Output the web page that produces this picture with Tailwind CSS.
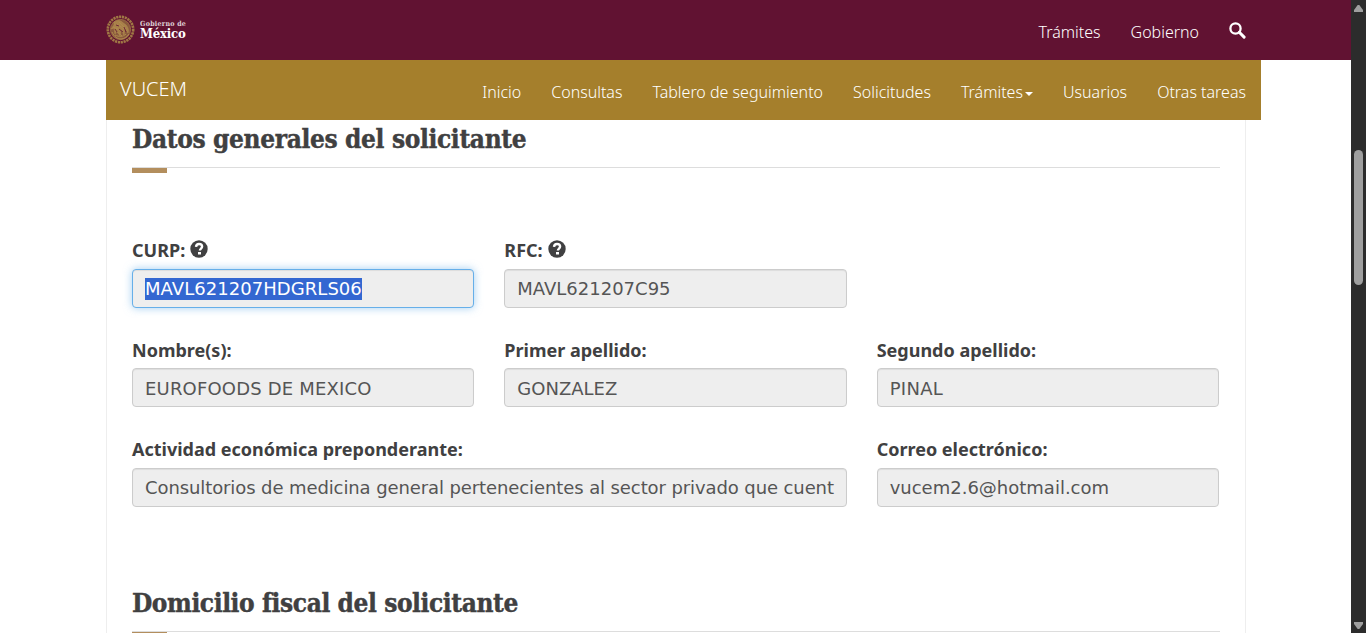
<!DOCTYPE html>
<html lang="es">
<head>
<meta charset="utf-8">
<title>VUCEM</title>
<script src="https://cdn.jsdelivr.net/npm/@tailwindcss/browser@4"></script>
</head>
<body class="flex h-[633px] overflow-hidden bg-white font-['Noto_Sans',sans-serif] text-[#404041]">
<div class="flex h-full w-[1351px] flex-col">
  <header class="h-[60px] shrink-0 bg-[#611232] pl-[106px]">
    <div class="flex h-full w-[1140px] items-center justify-between text-white">
      <div class="flex items-center gap-[5px]">
        <svg class="-mt-px size-[29px]" viewBox="0 0 29 29" fill="none" stroke="#b08a4e">
          <circle cx="14.5" cy="14.5" r="12.7" stroke="#a07845" stroke-width="2.6" stroke-dasharray="2.2 .7"/>
          <circle cx="14.5" cy="14.5" r="10.2" fill="#8a5a3d" stroke-width=".5"/>
          <path d="M8 7c3-2 6-2 8 0l4 3c2 2 3 5 2 8l-3-5-1 7-3-6-1 7-3-6-2 4-1-6-3 1 3-4z" fill="#a8814a" stroke-width=".6"/>
          <path d="M6 17c2 5 6 7 9 7s6-2 8-5M9 20c4 2 8 2 11-1M7 12l5 2M11 9l7 5M13 7l7 7M10 16l6 5" stroke-width="1"/>
          <path d="M10 10l3 1M13 14l4 3M18 12l2 5M9 14l2 3" stroke="#611232" stroke-width=".8"/>
        </svg>
        <div class="flex flex-col font-['DejaVu_Serif_Condensed','DejaVu_Serif',serif]">
          <span class="text-[7px] leading-[8px] font-bold tracking-[0.28px] opacity-80">Gobierno de</span>
          <span class="text-[13px] leading-[12px] font-bold tracking-[-0.2px]">México</span>
        </div>
      </div>
      <nav class="flex items-center gap-[30px] pt-1 text-[16px] leading-6 font-[350]">
        <a>Trámites</a>
        <a>Gobierno</a>
        <svg class="-mt-[3px] size-[17px]" viewBox="0 0 17 17" fill="none" stroke="#fff">
          <circle cx="6.5" cy="6.5" r="5.1" stroke-width="2.3"/>
          <path d="M10.3 10.3l4.8 4.8" stroke-width="3" stroke-linecap="round"/>
        </svg>
      </nav>
    </div>
  </header>
  <div class="ml-[106px] flex h-[60px] w-[1155px] shrink-0 justify-between bg-[#a57f2c] pr-[15px] pl-[14px] font-[350] text-white">
    <span class="pt-[15px] text-[20px] leading-7">VUCEM</span>
    <nav class="flex items-start gap-[30px] pt-5 text-[16px] leading-6">
      <a>Inicio</a>
      <a>Consultas</a>
      <a>Tablero de seguimiento</a>
      <a>Solicitudes</a>
      <a class="flex items-center gap-[2px]">Trámites<svg class="mt-1 h-1 w-2" viewBox="0 0 8 4" fill="#fff"><path d="M0 0h8L4 4z"/></svg></a>
      <a>Usuarios</a>
      <a>Otras tareas</a>
    </nav>
  </div>
  <main class="ml-[106px] w-[1140px] grow overflow-hidden border-x border-[#eee] pl-[25px]">
    <h2 class="h-12 w-[1088px] border-b border-[#ddd] pt-[3px] font-['DejaVu_Serif_Condensed','DejaVu_Serif',serif] text-[26px] leading-8 font-bold whitespace-nowrap tracking-[-0.36px] [-webkit-text-stroke:0.4px_#404041]">Datos generales del solicitante</h2>
    <div class="h-[5px] w-[35px] bg-[#b38e5d]"></div>
    <form class="mt-16 grid w-[1087px] grid-cols-3 gap-x-[30px] text-[18px]">
      <div class="h-[99px]">
        <label class="mb-[5px] flex h-[27px] items-center gap-[5px] font-bold">CURP:
          <svg class="-mt-[3px] size-[18px]" viewBox="0 0 18 18"><circle cx="9" cy="9" r="8.7" fill="#404041"/><path d="M6 6.8C6.2 4.8 7.3 4 9 4s3.1 1 3.1 2.6c0 2-2.2 2-2.2 4" fill="none" stroke="#fff" stroke-width="2.4"/><path d="M8 12h3v2.5H8z" fill="#fff"/></svg>
        </label>
        <div class="flex h-[39px] items-center rounded border border-[#66afe9] bg-[#eee] px-3 font-['DejaVu_Sans',sans-serif] text-white shadow-[inset_0_1px_1px_rgba(0,0,0,.075),0_0_8px_rgba(102,175,233,.6)]"><span class="h-[22px] bg-[#3367d1] leading-[22px] tracking-[0.05px]">MAVL621207HDGRLS06</span></div>
      </div>
      <div>
        <label class="mb-[5px] flex h-[27px] items-center gap-[5px] font-bold">RFC:
          <svg class="-mt-[3px] size-[18px]" viewBox="0 0 18 18"><circle cx="9" cy="9" r="8.7" fill="#404041"/><path d="M6 6.8C6.2 4.8 7.3 4 9 4s3.1 1 3.1 2.6c0 2-2.2 2-2.2 4" fill="none" stroke="#fff" stroke-width="2.4"/><path d="M8 12h3v2.5H8z" fill="#fff"/></svg>
        </label>
        <div class="flex h-[39px] items-center rounded border border-[#ccc] bg-[#eee] px-3 font-['DejaVu_Sans',sans-serif] text-[#555] shadow-[inset_0_1px_1px_rgba(0,0,0,.075)]">MAVL621207C95</div>
      </div>
      <div class="col-start-1 h-[100px]">
        <label class="mb-[5px] flex h-[27px] items-center pt-px font-bold">Nombre(s):</label>
        <div class="flex h-[39px] items-center rounded border border-[#ccc] bg-[#eee] px-3 pt-px font-['DejaVu_Sans',sans-serif] text-[#555] tracking-[0.18px] shadow-[inset_0_1px_1px_rgba(0,0,0,.075)]">EUROFOODS DE MEXICO</div>
      </div>
      <div>
        <label class="mb-[5px] flex h-[27px] items-center pt-px font-bold">Primer apellido:</label>
        <div class="flex h-[39px] items-center rounded border border-[#ccc] bg-[#eee] px-3 pt-px font-['DejaVu_Sans',sans-serif] text-[#555] shadow-[inset_0_1px_1px_rgba(0,0,0,.075)]">GONZALEZ</div>
      </div>
      <div>
        <label class="mb-[5px] flex h-[27px] items-center pt-px font-bold">Segundo apellido:</label>
        <div class="flex h-[39px] items-center rounded border border-[#ccc] bg-[#eee] px-3 pt-px font-['DejaVu_Sans',sans-serif] text-[#555] tracking-[0.3px] shadow-[inset_0_1px_1px_rgba(0,0,0,.075)]">PINAL</div>
      </div>
      <div class="col-span-2 h-[99px]">
        <label class="mb-[5px] flex h-[27px] items-center font-bold">Actividad económica preponderante:</label>
        <div class="flex h-[39px] items-center rounded border border-[#ccc] bg-[#eee] px-3 font-['DejaVu_Sans',sans-serif] text-[#555] shadow-[inset_0_1px_1px_rgba(0,0,0,.075)]"><span class="whitespace-nowrap tracking-[-0.1px]">Consultorios de medicina general pertenecientes al sector privado que cuent</span></div>
      </div>
      <div>
        <label class="mb-[5px] flex h-[27px] items-center font-bold">Correo electrónico:</label>
        <div class="flex h-[39px] items-center rounded border border-[#ccc] bg-[#eee] px-3 font-['DejaVu_Sans',sans-serif] text-[#555] shadow-[inset_0_1px_1px_rgba(0,0,0,.075)]">vucem2.6@hotmail.com</div>
      </div>
    </form>
    <h2 class="mt-[49px] h-12 w-[1088px] border-b border-[#ddd] pt-[3px] font-['DejaVu_Serif_Condensed','DejaVu_Serif',serif] text-[26px] leading-8 font-bold whitespace-nowrap tracking-[-0.42px] [-webkit-text-stroke:0.4px_#404041]">Domicilio fiscal del solicitante</h2>
    <div class="h-[5px] w-[35px] bg-[#b38e5d]"></div>
  </main>
</div>
<div class="flex h-full w-[15px] flex-col items-center bg-[#2c2c2c] pt-[5px] pb-[4px]">
  <svg class="h-[7px] w-[9px]" viewBox="0 0 9 7" fill="#9f9f9f"><path d="M3.7 0h1.6L9 5v2H0V5z"/></svg>
  <div class="mt-[138px] h-[135px] w-[9px] rounded-full bg-[#9f9f9f]"></div>
  <svg class="mt-auto h-[7px] w-[9px]" viewBox="0 0 9 7" fill="#9f9f9f"><path d="M3.7 7h1.6L9 2V0H0v2z"/></svg>
</div>
</body>
</html>
